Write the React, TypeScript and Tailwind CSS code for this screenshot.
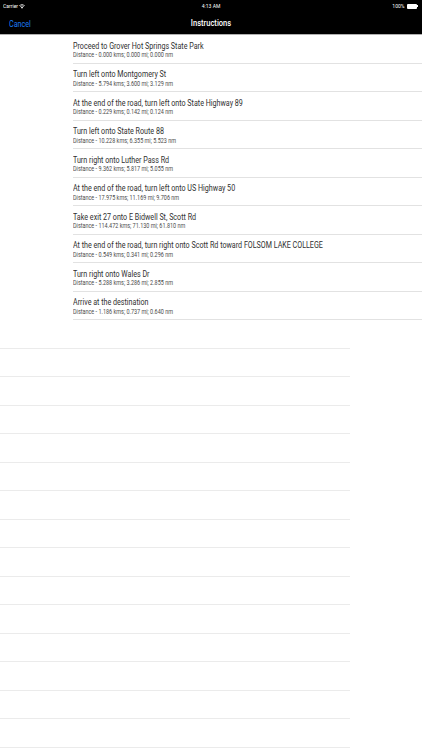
import React from 'react';

const steps = [
  { text: 'Proceed to Grover Hot Springs State Park', dist: 'Distance - 0.000 kms; 0.000 mi; 0.000 nm' },
  { text: 'Turn left onto Montgomery St', dist: 'Distance - 5.794 kms; 3.600 mi; 3.129 nm' },
  { text: 'At the end of the road, turn left onto State Highway 89', dist: 'Distance - 0.229 kms; 0.142 mi; 0.124 nm' },
  { text: 'Turn left onto State Route 88', dist: 'Distance - 10.228 kms; 6.355 mi; 5.523 nm' },
  { text: 'Turn right onto Luther Pass Rd', dist: 'Distance - 9.362 kms; 5.817 mi; 5.055 nm' },
  { text: 'At the end of the road, turn left onto US Highway 50', dist: 'Distance - 17.975 kms; 11.169 mi; 9.706 nm' },
  { text: 'Take exit 27 onto E Bidwell St, Scott Rd', dist: 'Distance - 114.472 kms; 71.130 mi; 61.810 nm' },
  { text: 'At the end of the road, turn right onto Scott Rd toward FOLSOM LAKE COLLEGE', dist: 'Distance - 0.549 kms; 0.341 mi; 0.296 nm' },
  { text: 'Turn right onto Wales Dr', dist: 'Distance - 5.288 kms; 3.286 mi; 2.855 nm' },
  { text: 'Arrive at the destination', dist: 'Distance - 1.186 kms; 0.737 mi; 0.640 nm' },
];

function Wifi() {
  return (
    <svg width="6" height="5" viewBox="0 0 14 10" className="ml-[2px]">
      <path d="M7 10 L4.5 7 A3.5 3.5 0 0 1 9.5 7 Z" fill="white" />
      <path d="M2.6 5.2 A6.5 6.5 0 0 1 11.4 5.2" stroke="white" strokeWidth="1.6" fill="none" />
      <path d="M0.6 3 A9.5 9.5 0 0 1 13.4 3" stroke="white" strokeWidth="1.6" fill="none" />
    </svg>
  );
}

function Battery() {
  return (
    <div className="flex items-center ml-[2px]">
      <div className="w-[10px] h-[5px] bg-white rounded-[1px]" />
      <div className="w-[1px] h-[2px] bg-white" />
    </div>
  );
}

function App() {
  const empty = Array.from({ length: 16 });
  return (
    <div
      className="w-[422px] h-[750px] overflow-hidden bg-white"
      style={{ fontFamily: 'Roboto, "Liberation Sans", sans-serif' }}
    >
      {/* Header */}
      <div className="bg-black h-[35px] border-b border-[#b0b0b0] flex flex-col">
        <div className="h-[12px] flex items-center justify-between px-[3px] text-white text-[6px] leading-none relative">
          <div className="flex items-center">
            <span className="inline-block scale-x-[0.84] origin-left -mr-[4px]">Carrier</span>
            <Wifi />
          </div>
          <span className="absolute left-1/2 -translate-x-1/2 inline-block scale-x-[0.84]">4:13 AM</span>
          <div className="flex items-center pr-[1px]">
            <span className="inline-block scale-x-[0.84] origin-right">100%</span>
            <Battery />
          </div>
        </div>
        <div className="flex-1 flex items-center relative pt-[2px]">
          <span className="ml-[9px] inline-block scale-x-[0.84] origin-left text-[#1c7cf4] text-[8.5px]">Cancel</span>
          <span className="absolute left-1/2 -translate-x-1/2 inline-block scale-x-[0.84] text-white text-[9px] font-medium">
            Instructions
          </span>
        </div>
      </div>

      {/* Steps */}
      {steps.map((s, i) => (
        <div key={i} className="h-[28.5px] ml-[73px] border-b border-[#e2e2e2] pt-[5.5px]">
          <div className="text-[8.5px] leading-[11px] text-[#303030] whitespace-nowrap scale-x-[0.84] origin-left">{s.text}</div>
          <div className="text-[6.5px] leading-[7px] text-[#4a4a4a] mt-[0.5px] whitespace-nowrap scale-x-[0.84] origin-left">{s.dist}</div>
        </div>
      ))}

      {empty.map((_, i) => (
        <div key={i} className="h-[28.5px] w-[350px] border-b border-[#ebebeb]" />
      ))}
    </div>
  );
}

export default App;
